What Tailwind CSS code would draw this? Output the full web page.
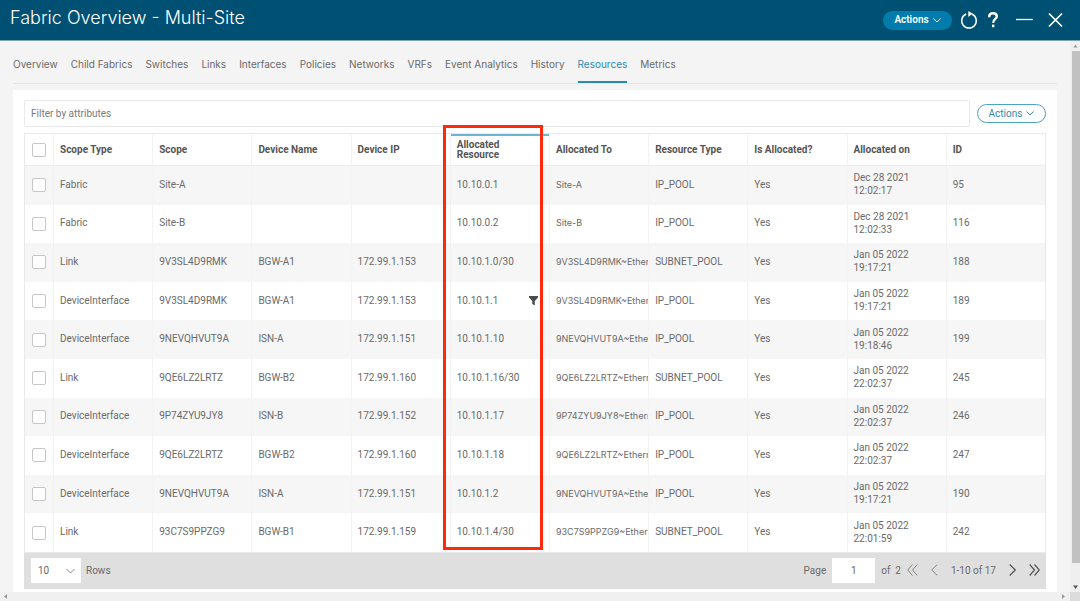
<!DOCTYPE html>
<html lang="en">

<head>
    <meta charset="UTF-8">
    <meta name="viewport" content="width=device-width, initial-scale=1.0">
    <title>Fabric Overview - Multi-Site</title>
    <script src="https://cdn.jsdelivr.net/npm/@tailwindcss/browser@4"></script>
</head>

<body class="h-screen flex flex-col overflow-hidden bg-[#f4f4f4] font-['Roboto','Liberation_Sans',sans-serif] text-[10px] text-[#6a6a6a]">
    <!-- Title bar -->
    <header class="flex items-center justify-between h-[41px] shrink-0 pl-[10px] pr-[17px] bg-[#005073] border-b border-[#7fa3b5] text-white">
        <h1 class="font-['Inter',sans-serif] font-light text-[18px] leading-6 pb-[5px]">Fabric Overview - Multi-Site</h1>
        <div class="flex items-center">
            <button class="flex items-center justify-center gap-1 w-[69px] h-[19px] pb-px rounded-full bg-[#017cad] font-semibold">
                Actions
                <svg class="w-2 h-2" viewBox="0 0 8 8" fill="none" stroke="currentColor"><path d="M.5 2.500L4 6l3.500-3.500" /></svg>
            </button>
            <button class="ml-2" aria-label="Refresh">
                <svg class="w-[18px] h-[20px]" viewBox="0 0 18 20" fill="none" stroke="currentColor" stroke-width="1.500">
                    <path d="M11.800 4a7.300 7.300 0 1 1-5.600 0" />
                    <path d="M8.300 1l4.200 2.600L8.300 7z" fill="currentColor" stroke="none" />
                </svg>
            </button>
            <button class="ml-[9px]" aria-label="Help">
                <svg class="w-[12px] h-[18px]" viewBox="0 0 12 18" fill="none" stroke="currentColor" stroke-width="2.400">
                    <path d="M2.200 6.200V5.600C2.200 3.400 3.800 2.200 6 2.200s3.800 1.200 3.800 3.200C9.800 8 6.200 8 6.200 11.800" />
                    <path d="M6.200 13.600v2.600" />
                </svg>
            </button>
            <button class="ml-[17px]" aria-label="Minimize">
                <svg class="w-[17px] h-4" viewBox="0 0 17 16" stroke="currentColor" stroke-width="1.300"><path d="M0 7.500h17" /></svg>
            </button>
            <button class="ml-[15px]" aria-label="Close">
                <svg class="w-[15px] h-4" viewBox="0 0 15 16" stroke="currentColor" stroke-width="1.700"><path d="M1 1.500l13 13M14 1.500l-13 13" /></svg>
            </button>
        </div>
    </header>

    <div class="flex flex-1 min-h-0">
        <main class="flex-1 min-w-0 flex flex-col pl-[13px] pr-[13px]">
            <!-- Tabs -->
            <nav class="flex gap-[13px] h-[43px] shrink-0 mb-[6px] border-b border-[#e6e6e6] font-['Inter',sans-serif] leading-[46px]">
                <a href="#">Overview</a>
                <a href="#">Child Fabrics</a>
                <a href="#">Switches</a>
                <a href="#">Links</a>
                <a href="#">Interfaces</a>
                <a href="#">Policies</a>
                <a href="#">Networks</a>
                <a href="#">VRFs</a>
                <a href="#">Event Analytics</a>
                <a href="#">History</a>
                <a href="#" class="h-[42px] border-b-2 border-[#2b8ab3] text-[#2b8ab3]">Resources</a>
                <a href="#">Metrics</a>
            </nav>

            <section class="flex-1 bg-white pt-[10px] px-[11px]">
                <div class="flex items-center gap-[7px] mb-[6px]">
                    <input type="text" aria-label="Filter by attributes" placeholder="Filter by attributes"
                        class="flex-1 h-[27px] px-[6px] border border-[#eaeaea] rounded-xs placeholder:text-[#7a7a7a] focus:outline-none">
                    <button class="flex items-center justify-center gap-1 w-[69px] h-[19px] pb-px rounded-full border border-[#4ba3c7] text-[#3587ab]">
                        Actions
                        <svg class="w-2 h-2" viewBox="0 0 8 8" fill="none" stroke="currentColor"><path d="M.5 2.500L4 6l3.500-3.500" /></svg>
                    </button>
                </div>

                <table class="w-full h-[420px] table-fixed border border-[#e9e9e9] border-separate border-spacing-0 text-left">
                    <thead>
                        <tr id="head-row" class="h-[32px] text-[#555] leading-[10px]">
                            <th class="w-[28px] pl-[7px] border-b border-[#ececec]">
                                <input type="checkbox" aria-label="Select all rows"
                                    class="block appearance-none w-[14px] h-[14px] bg-white border border-[#c6c6c6] rounded-xs">
                            </th>
                        </tr>
                    </thead>
                    <tbody id="rows">
                        <!-- Populated by JavaScript -->
                    </tbody>
                </table>

                <!-- Pagination -->
                <div class="flex items-center h-[36px] pl-[7px] pr-[6px] pb-[2px] bg-[#dfdfdf]">
                    <div class="relative">
                        <select id="page-size" class="block appearance-none w-[50px] h-[25px] pl-[7px] bg-white">
                            <option>10</option>
                            <option>25</option>
                            <option>50</option>
                        </select>
                        <svg class="absolute right-[6px] top-2 w-[9px] h-[9px] pointer-events-none" viewBox="0 0 9 9" fill="none" stroke="#888"><path d="M.5 3l4 4 4-4" /></svg>
                    </div>
                    <label for="page-size" class="ml-[5px]">Rows</label>
                    <label for="page" class="ml-auto">Page</label>
                    <input id="page" type="text" value="1" class="w-[43px] h-[25px] mx-[6px] bg-white text-center">
                    <span>of&nbsp; 2</span>
                    <button class="ml-[6px]" aria-label="First page">
                        <svg class="w-[11px] h-3" viewBox="0 0 11 12" fill="none" stroke="#858585"><path d="M5.500.5L.7 6l4.800 5.500M10.300.5L5.500 6l4.800 5.500" /></svg>
                    </button>
                    <button class="ml-[13px]" aria-label="Previous page">
                        <svg class="w-[7px] h-3" viewBox="0 0 7 12" fill="none" stroke="#858585"><path d="M6.300.5L.7 6l5.600 5.500" /></svg>
                    </button>
                    <span class="mx-[13px]">1-10 of 17</span>
                    <button aria-label="Next page">
                        <svg class="w-[7px] h-3" viewBox="0 0 7 12" fill="none" stroke="#555" stroke-width="1.200"><path d="M.7.5L6.300 6 .7 11.500" /></svg>
                    </button>
                    <button class="ml-[13px]" aria-label="Last page">
                        <svg class="w-[11px] h-3" viewBox="0 0 11 12" fill="none" stroke="#555" stroke-width="1.200"><path d="M.7.5L5.500 6 .7 11.500M5.500.5L10.300 6l-4.800 5.500" /></svg>
                    </button>
                </div>
            </section>
        </main>

        <!-- Vertical scrollbar -->
        <div class="flex flex-col items-center w-[10px] bg-[#efefef]">
            <svg class="w-[5px] h-[10px]" viewBox="0 0 5 10"><path d="M.5 6.500h4L2.500 3.500z" fill="#999" /></svg>
            <div class="w-[8px] h-[512px] ml-[2px] bg-[#c1c1c1]"></div>
            <svg class="w-[5px] h-[10px] mt-auto" viewBox="0 0 5 10"><path d="M0 3.500h5L2.500 7z" fill="#555" /></svg>
        </div>
    </div>

    <!-- Horizontal scrollbar -->
    <div class="flex items-center justify-between h-[9px] shrink-0 pl-[3px] bg-[#f0f0f0]">
        <svg class="w-[5px] h-[7px]" viewBox="0 0 5 7"><path d="M4 1v5L1 3.500z" fill="#999" /></svg>
        <div class="flex items-center gap-1">
            <svg class="w-[5px] h-[7px]" viewBox="0 0 5 7"><path d="M1 1v5l3-2.500z" fill="#999" /></svg>
            <div class="w-[10px] h-[9px] bg-[#dcdcdc]"></div>
        </div>
    </div>

    <script>
        const columns = [
            'Scope Type', 'Scope', 'Device Name', 'Device IP', 'Allocated Resource',
            'Allocated To', 'Resource Type', 'Is Allocated?', 'Allocated on', 'ID'
        ];

        const resources = [
            ['Fabric', 'Site-A', '', '', '10.10.0.1', 'Site-A', 'IP_POOL', 'Yes', 'Dec 28 2021 12:02:17', '95'],
            ['Fabric', 'Site-B', '', '', '10.10.0.2', 'Site-B', 'IP_POOL', 'Yes', 'Dec 28 2021 12:02:33', '116'],
            ['Link', '9V3SL4D9RMK', 'BGW-A1', '172.99.1.153', '10.10.1.0/30', '9V3SL4D9RMK~Ethern', 'SUBNET_POOL', 'Yes', 'Jan 05 2022 19:17:21', '188'],
            ['DeviceInterface', '9V3SL4D9RMK', 'BGW-A1', '172.99.1.153', '10.10.1.1', '9V3SL4D9RMK~Ethern', 'IP_POOL', 'Yes', 'Jan 05 2022 19:17:21', '189'],
            ['DeviceInterface', '9NEVQHVUT9A', 'ISN-A', '172.99.1.151', '10.10.1.10', '9NEVQHVUT9A~Ether', 'IP_POOL', 'Yes', 'Jan 05 2022 19:18:46', '199'],
            ['Link', '9QE6LZ2LRTZ', 'BGW-B2', '172.99.1.160', '10.10.1.16/30', '9QE6LZ2LRTZ~Ethern', 'SUBNET_POOL', 'Yes', 'Jan 05 2022 22:02:37', '245'],
            ['DeviceInterface', '9P74ZYU9JY8', 'ISN-B', '172.99.1.152', '10.10.1.17', '9P74ZYU9JY8~Ethern', 'IP_POOL', 'Yes', 'Jan 05 2022 22:02:37', '246'],
            ['DeviceInterface', '9QE6LZ2LRTZ', 'BGW-B2', '172.99.1.160', '10.10.1.18', '9QE6LZ2LRTZ~Ethern', 'IP_POOL', 'Yes', 'Jan 05 2022 22:02:37', '247'],
            ['DeviceInterface', '9NEVQHVUT9A', 'ISN-A', '172.99.1.151', '10.10.1.2', '9NEVQHVUT9A~Ether', 'IP_POOL', 'Yes', 'Jan 05 2022 19:17:21', '190'],
            ['Link', '93C7S9PPZG9', 'BGW-B1', '172.99.1.159', '10.10.1.4/30', '93C7S9PPZG9~Ethern', 'SUBNET_POOL', 'Yes', 'Jan 05 2022 22:01:59', '242']
        ];

        const ALLOCATED_RESOURCE = 4;
        const ALLOCATED_TO = 5;
        const ALLOCATED_ON = 8;
        const FILTER_ROW = 3;

        // Outline around the whole Allocated Resource column, plus the sort bar
        const highlight = `
            <div class="absolute left-0 right-0 top-0 h-[2px] bg-[#6ab5d1]"></div>
            <div class="absolute z-10 -left-2 -top-[9px] w-[100px] h-[425px] border-3 border-[#fb2a0c] pointer-events-none"></div>
        `;

        const filterIcon = `
            <svg class="absolute right-[11px] top-[14px] w-[9px] h-[10px]" viewBox="0 0 9 10">
                <path d="M0 0h9v1.500L5.800 5v4.500L3.300 8V5L0 1.500z" fill="#4a4a4a" />
            </svg>
        `;

        // Header cells
        const headRow = document.getElementById('head-row');
        columns.forEach((name, i) => {
            const th = document.createElement('th');
            th.className = 'relative pl-[6px] pr-8 border-b border-l border-b-[#ececec] border-l-[#f3f3f3] font-bold';
            if (i !== ALLOCATED_RESOURCE) th.classList.add('whitespace-nowrap');
            th.innerHTML = name + (i === ALLOCATED_RESOURCE ? highlight : '');
            headRow.appendChild(th);
        });

        // Body rows
        const rows = document.getElementById('rows');
        resources.forEach((item, r) => {
            const tr = document.createElement('tr');
            tr.className = 'odd:bg-[#f6f6f6] leading-[13px]';
            tr.innerHTML = `
                <td class="pl-[7px]">
                    <input type="checkbox" aria-label="Select resource ${item[9]}"
                        class="block appearance-none w-[14px] h-[14px] bg-white border border-[#c6c6c6] rounded-xs">
                </td>
            ` + item.map((value, i) => `
                <td class="relative pl-[6px] pb-[2px] border-l border-[#f3f3f3] overflow-hidden whitespace-nowrap ${i === ALLOCATED_TO ? "font-['Inter',sans-serif] text-[9px]" : ''}">
                    ${i === ALLOCATED_ON ? value.slice(0, 11) + '<br>' + value.slice(12) : value}
                    ${i === ALLOCATED_RESOURCE && r === FILTER_ROW ? filterIcon : ''}
                </td>
            `).join('');
            rows.appendChild(tr);
        });
    </script>
</body>

</html>
